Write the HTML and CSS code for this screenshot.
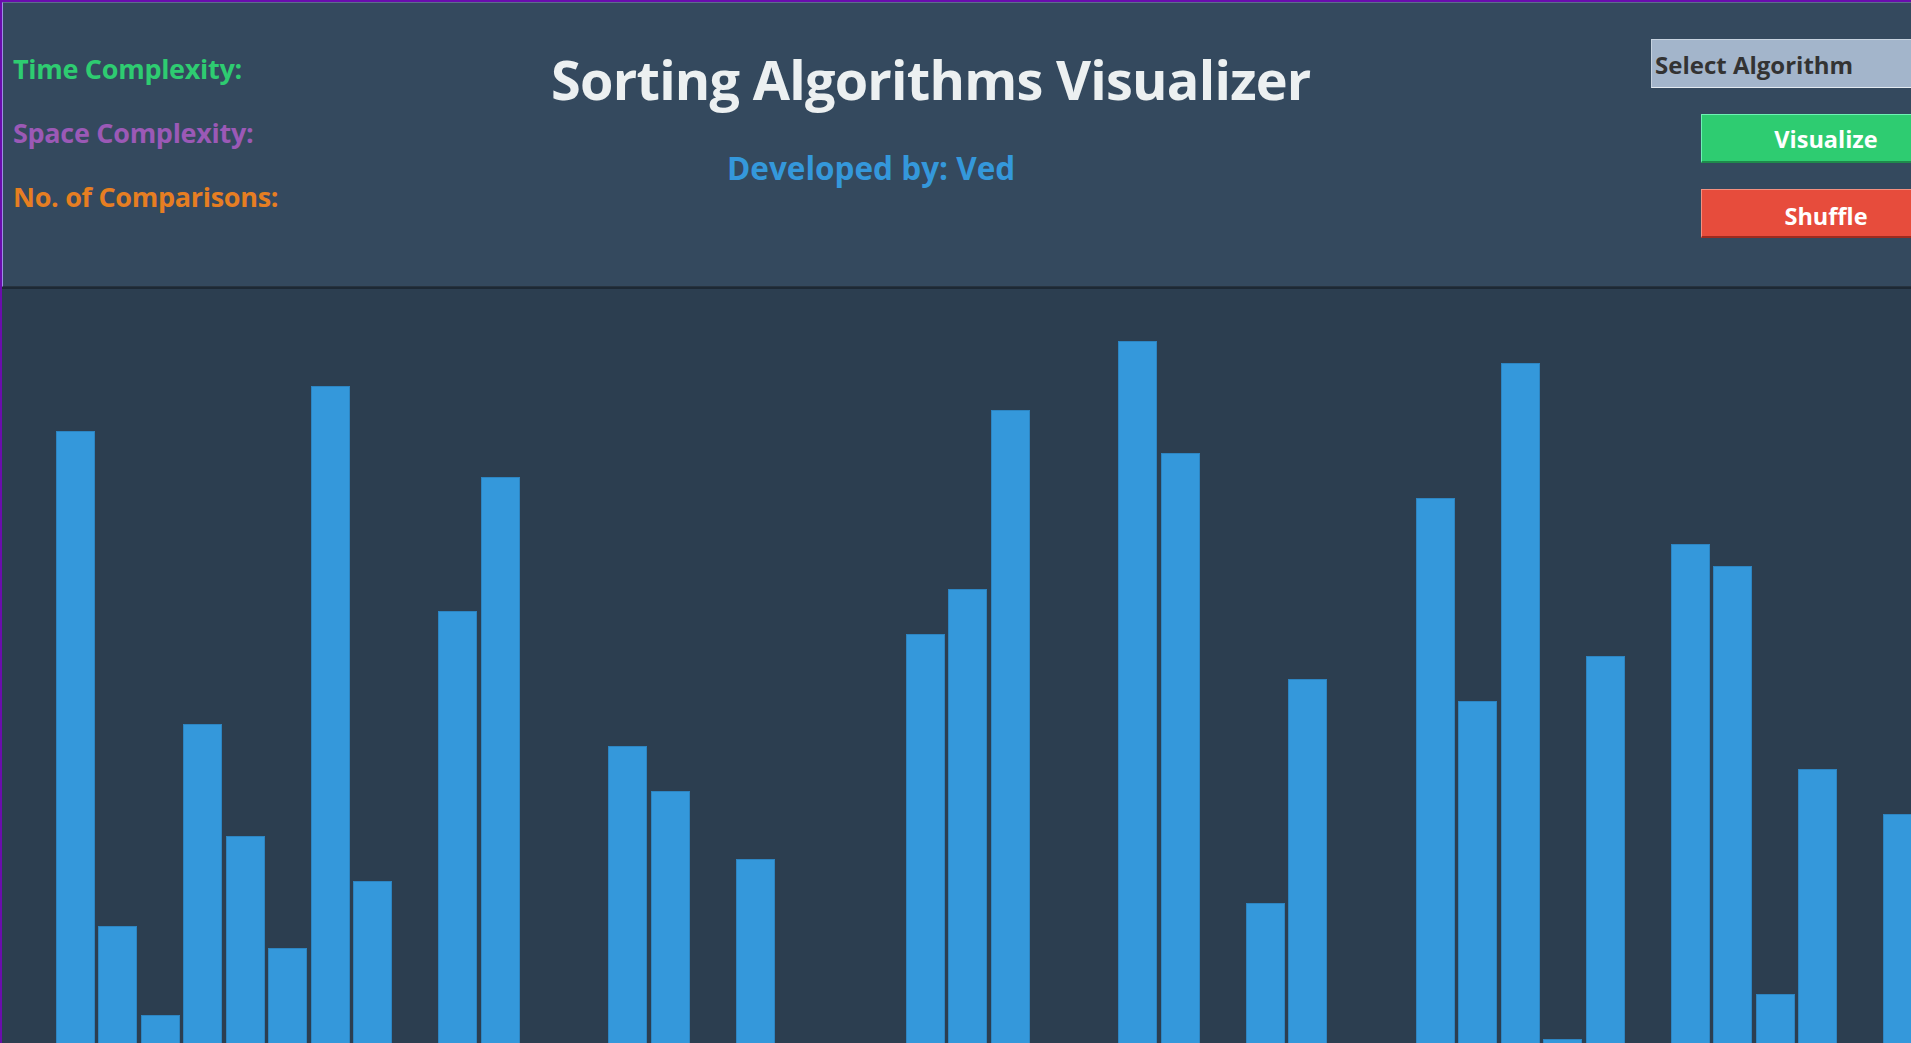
FILE: index.html
```html
<!DOCTYPE html>
<html lang="en">
<head>
<meta charset="utf-8">
<title>Sorting Algorithms Visualizer</title>
<link rel="stylesheet" href="styles.css">
</head>
<body>
<div class="app">
  <header class="header">
    <div class="stats">
      <div class="stat stat-time">Time Complexity:</div>
      <div class="stat stat-space">Space Complexity:</div>
      <div class="stat stat-comp">No. of Comparisons:</div>
    </div>
    <div class="titles">
      <h1 class="title">Sorting Algorithms Visualizer</h1>
      <div class="credit">Developed by: Ved</div>
    </div>
    <div class="controls">
      <div class="algo-select">Select Algorithm</div>
      <button class="btn btn-visualize">Visualize</button>
      <button class="btn btn-shuffle">Shuffle</button>
    </div>
  </header>
  <main class="bars">
    <div class="bar" style="height:669px"></div>
    <div class="bar" style="height:174px"></div>
    <div class="bar" style="height:85px"></div>
    <div class="bar" style="height:376px"></div>
    <div class="bar" style="height:264px"></div>
    <div class="bar" style="height:152px"></div>
    <div class="bar" style="height:714px"></div>
    <div class="bar" style="height:219px"></div>
    <div class="bar" style="height:30px"></div>
    <div class="bar" style="height:489px"></div>
    <div class="bar" style="height:623px"></div>
    <div class="bar" style="height:30px"></div>
    <div class="bar" style="height:30px"></div>
    <div class="bar" style="height:354px"></div>
    <div class="bar" style="height:309px"></div>
    <div class="bar" style="height:30px"></div>
    <div class="bar" style="height:241px"></div>
    <div class="bar" style="height:30px"></div>
    <div class="bar" style="height:30px"></div>
    <div class="bar" style="height:30px"></div>
    <div class="bar" style="height:466px"></div>
    <div class="bar" style="height:511px"></div>
    <div class="bar" style="height:690px"></div>
    <div class="bar" style="height:30px"></div>
    <div class="bar" style="height:30px"></div>
    <div class="bar" style="height:759px"></div>
    <div class="bar" style="height:647px"></div>
    <div class="bar" style="height:30px"></div>
    <div class="bar" style="height:197px"></div>
    <div class="bar" style="height:421px"></div>
    <div class="bar" style="height:30px"></div>
    <div class="bar" style="height:30px"></div>
    <div class="bar" style="height:602px"></div>
    <div class="bar" style="height:399px"></div>
    <div class="bar" style="height:737px"></div>
    <div class="bar" style="height:61px"></div>
    <div class="bar" style="height:444px"></div>
    <div class="bar" style="height:30px"></div>
    <div class="bar" style="height:556px"></div>
    <div class="bar" style="height:534px"></div>
    <div class="bar" style="height:106px"></div>
    <div class="bar" style="height:331px"></div>
    <div class="bar" style="height:30px"></div>
    <div class="bar" style="height:286px"></div>
    <div class="bar" style="height:400px"></div>
    <div class="bar" style="height:200px"></div>
  </main>
</div>
</body>
</html>
```
FILE: styles.css
```css
html, body {
  margin: 0;
  padding: 0;
  overflow: hidden;
  background: #2c3e50;
}

body {
  font-family: "Open Sans", "Noto Sans", "DejaVu Sans", sans-serif;
  font-weight: 700;
}

.app {
  width: 1960px;
  height: 1100px;
  border-top: 2px solid #6a0dad;
  border-left: 2px solid #6a0dad;
  display: flex;
  flex-direction: column;
}

.header {
  background: #34495e;
  border-top: 1px solid #5b6f88;
  border-left: 1px solid #9d8ee6;
  border-bottom: 1px solid #27333f;
  height: 283px;
  display: grid;
  grid-template-columns: 546px 1102px 300px;
  flex: none;
}

.stats {
  padding: 52px 0 0 10px;
  display: flex;
  flex-direction: column;
  gap: 37px;
}

.stat {
  font-size: 27px;
  line-height: 27px;
  letter-spacing: -0.3px;
  white-space: nowrap;
}

.stat-time { color: #2ecc71; }
.stat-space { color: #9b59b6; }
.stat-comp { color: #e67e22; }

.titles {
  padding-top: 49px;
}

.title {
  margin: 0 0 0 2px;
  font-size: 54px;
  line-height: 54px;
  font-weight: 700;
  letter-spacing: -0.75px;
  color: #ecf0f1;
  white-space: nowrap;
}

.credit {
  margin: 46px 0 0 178px;
  font-size: 31.5px;
  line-height: 31px;
  color: #3498db;
  white-space: nowrap;
}

.controls {
  padding-top: 36px;
  display: flex;
  flex-direction: column;
  align-items: flex-start;
}

.algo-select {
  box-sizing: border-box;
  width: 300px;
  height: 49px;
  background: #a3b5cb;
  border: 1px solid #c6d2df;
  border-bottom-color: #e3eaf1;
  color: #333333;
  font-size: 24px;
  line-height: 49px;
  padding-left: 3px;
  white-space: nowrap;
}

.btn {
  box-sizing: border-box;
  width: 250px;
  height: 49px;
  margin-left: 50px;
  font-family: inherit;
  font-weight: 700;
  font-size: 23.5px;
  color: #ffffff;
  padding: 2px 0 0 0;
  cursor: pointer;
  border-style: solid;
  border-width: 1px 1px 2px 1px;
}

.btn-visualize {
  margin-top: 26px;
  background: #2ecc71;
  border-color: #6ef2b4 #2ecc71 #1f8a4c #6ef2b4;
}

.btn-shuffle {
  margin-top: 26px;
  padding-top: 5px;
  background: #e74c3c;
  border-color: #f5907f #e74c3c #9e2a1f #f5907f;
}

.bars {
  flex: none;
  height: 811px;
  border-top: 2px solid #1d2935;
  display: flex;
  align-items: flex-end;
  gap: 3.5px;
  padding-left: 53.5px;
}

.bar {
  box-sizing: border-box;
  flex: none;
  width: 39px;
  background: #3498db;
  border: 1px solid #2d85c2;
  border-bottom: none;
}
```
